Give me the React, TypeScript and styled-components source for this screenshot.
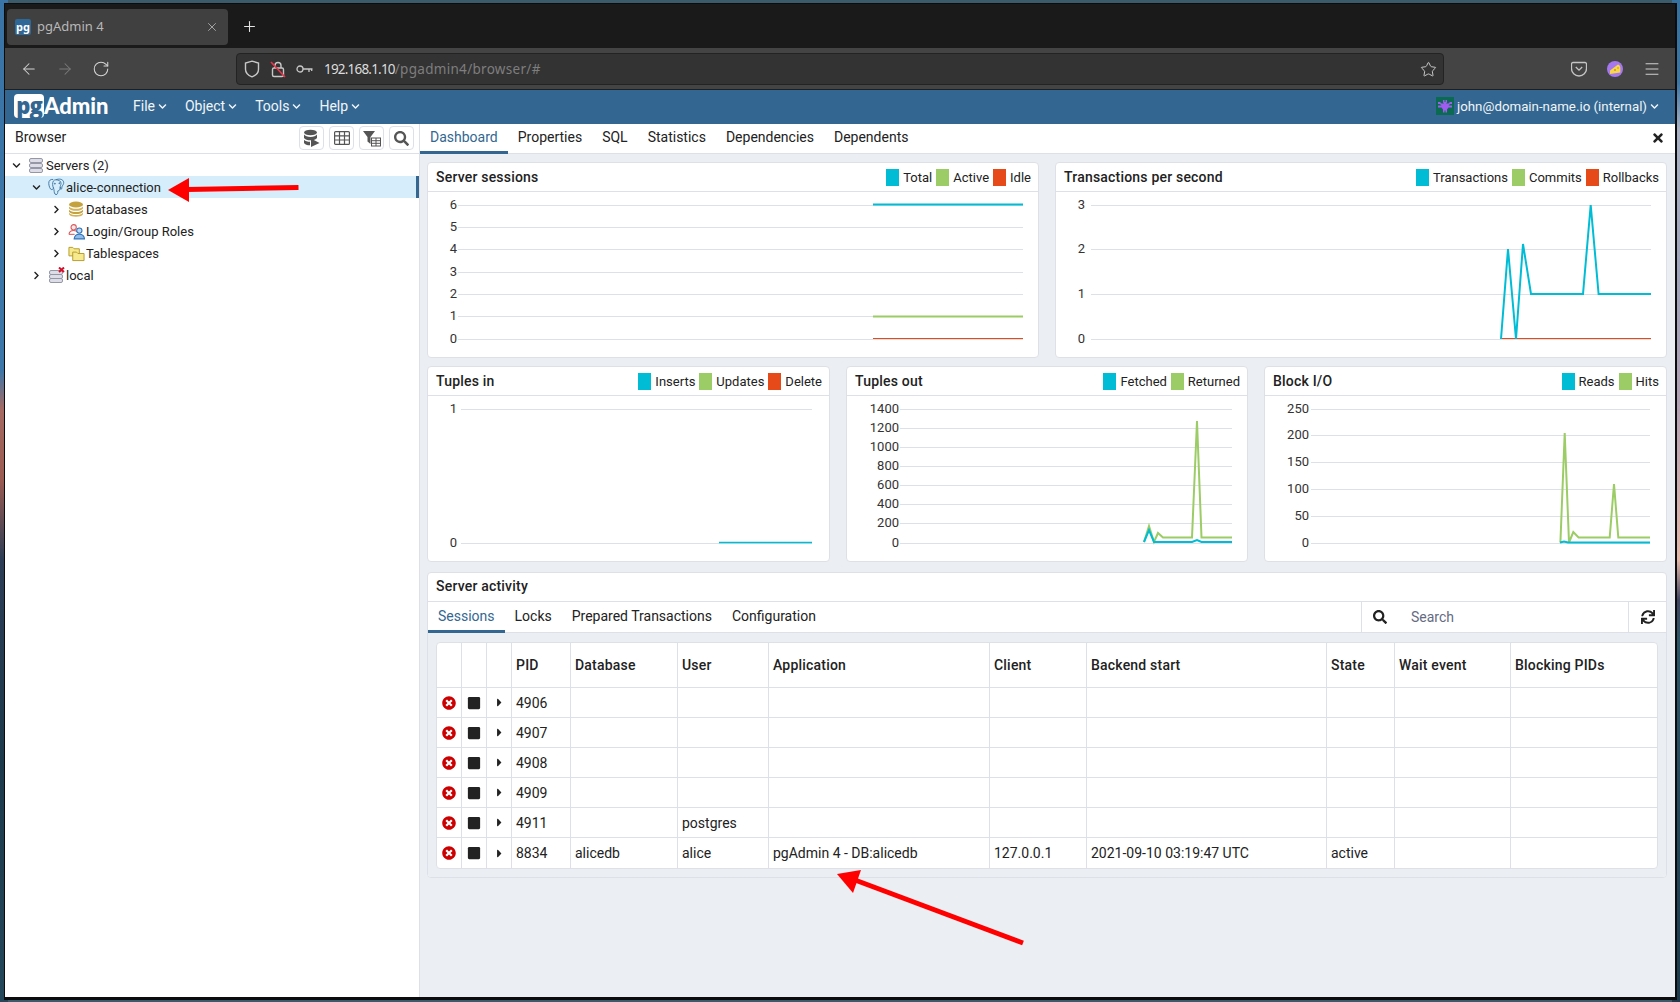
import React from "react";
import styled, { createGlobalStyle } from "styled-components";
import { FaSearch, FaSync, FaTimes, FaTimesCircle, FaSquare, FaCaretRight, FaChevronDown, FaChevronRight } from "react-icons/fa";
import { ArrowLeft, ArrowRight, RotateCw, Star, X, Plus, Menu } from "lucide-react";

const Global = createGlobalStyle`
  html, body { margin: 0; padding: 0; background: #10202c; }
  * { box-sizing: border-box; }
  body { font-family: Roboto, "Liberation Sans", sans-serif; font-size: 14px; color: #222; }
`;

const Screen = styled.div`
  position: relative;
  width: 1680px;
  height: 1002px;
  overflow: hidden;
  padding: 3px 3px 2px 4px;
  background:
    linear-gradient(to bottom, #3a73a6 0, #3d76a8 370px, #a56a62 410px, #9a5b52 480px, #2c3d55 560px, #1d3a4c 760px, #24485a 1002px) left / 8px 100% no-repeat,
    linear-gradient(to bottom, #35709f 0, #3b76a5 83px, #a9b2c4 130px, #9ea4bb 275px, #b0a0b4 400px, #e3b8a8 560px, #3f4560 600px, #2c5568 640px, #1c3a4c 1002px) right / 8px 100% no-repeat,
    #3b5a6a;
`;

const Window = styled.div`
  height: 100%;
  display: flex;
  flex-direction: column;
  border-style: solid;
  border-color: #0c0c0e;
  border-width: 1px 2px 3px 1px;
  overflow: hidden;
`;

const TabStrip = styled.div`
  height: 44px;
  flex: none;
  display: flex;
  align-items: flex-start;
  padding: 5px 0 0 2px;
  background: #1a1a1a;
`;

const BrowserTab = styled.div`
  width: 221px;
  height: 36px;
  display: flex;
  align-items: center;
  padding: 0 9px 0 8px;
  border-radius: 4px;
  background: #404040;
  color: #b8b8b8;
  font-family: "Noto Sans", sans-serif;
  font-size: 13px;
`;

const Favicon = styled.span`
  width: 16px;
  height: 16px;
  flex: none;
  display: flex;
  align-items: center;
  justify-content: center;
  margin-right: 6px;
  padding-bottom: 2px;
  border-radius: 2px;
  background: #2f6797;
  color: #fff;
  font: 700 11px/1 "Noto Sans", sans-serif;
`;

const TabTitle = styled.span`
  flex: 1;
  padding-bottom: 2px;
`;

const NewTab = styled.span`
  margin: 9px 0 0 13px;
  display: flex;
  color: #e4e4e4;
`;

const Toolbar = styled.div`
  height: 42px;
  flex: none;
  display: flex;
  align-items: center;
  padding-top: 1px;
  border-bottom: 1px solid #1f1f1f;
  background: #444;
`;

const NavIcons = styled.div<{ $width: number }>`
  width: ${(p) => p.$width}px;
  flex: none;
  display: flex;
  align-items: center;
  gap: 18px;
  padding-left: 15px;
  color: #d4d4d4;
`;

const UrlBar = styled.div`
  width: 1208px;
  height: 32px;
  flex: none;
  display: flex;
  align-items: center;
  gap: 10px;
  padding: 0 6px 0 7px;
  border: 1px solid #232323;
  border-radius: 4px;
  background: #333;
  color: #c8c8c8;
`;

const UrlText = styled.span`
  flex: 1;
  margin-left: 1px;
  font-family: "Noto Sans", sans-serif;
  font-size: 13.5px;
  color: #dcdcdc;
  letter-spacing: -0.8px;
`;

const UrlDim = styled.span`
  color: #7e7e7e;
  letter-spacing: 0.3px;
`;

const BrowserActions = styled.div`
  flex: none;
  display: flex;
  align-items: center;
  gap: 19px;
  margin-left: 127px;
  color: #d4d4d4;
`;

const Nav = styled.div`
  height: 34px;
  flex: none;
  display: flex;
  align-items: center;
  padding: 0 16px 2px 9px;
  background: #336791;
  color: #f2f5f8;
`;

const Logo = styled.div`
  width: 95px;
  display: flex;
  align-items: center;
  margin-right: 24px;
  color: #fff;
  font: 900 22px/1 Lato, "Open Sans", sans-serif;
`;

const LogoBox = styled.span`
  width: 30px;
  height: 24px;
  display: flex;
  align-items: center;
  justify-content: center;
  padding-bottom: 3px;
  border-radius: 4px;
  background: #fff;
  color: #336791;
  font: 800 22px/1 "Open Sans", sans-serif;
  letter-spacing: -1px;
`;

const MenuItem = styled.span`
  display: flex;
  align-items: center;
  gap: 3px;
  margin-right: 18px;
  font-size: 14px;
`;

const UserMenu = styled.div`
  margin-left: auto;
  display: flex;
  align-items: center;
  gap: 3px;
  font-size: 13.3px;
`;

const Body = styled.div`
  flex: 1;
  min-height: 0;
  display: flex;
  background: #fff;
`;

const Sidebar = styled.aside`
  width: 415px;
  flex: none;
  border-right: 1px solid #dde0e6;
  background: #fff;
`;

const SideHeader = styled.div`
  height: 30px;
  display: flex;
  align-items: center;
  padding: 0 5px 1px 10px;
  border-bottom: 1px solid #dde0e6;
`;

const SideTitle = styled.span`
  flex: 1;
  margin-bottom: 2px;
`;

const ToolGroup = styled.div`
  display: flex;
  gap: 5px;
`;

const ToolButton = styled.span`
  width: 25px;
  height: 24px;
  display: flex;
  align-items: center;
  justify-content: center;
  border: 1px solid #dde0e6;
  border-radius: 4px;
  color: #555;
`;

const Tree = styled.div``;

const TreeRow = styled.div<{ $level: number; $selected?: boolean }>`
  height: 22px;
  display: flex;
  align-items: center;
  padding-left: ${(p) => 5 + p.$level * 20}px;
  border-right: 3px solid ${(p) => (p.$selected ? "#336791" : "transparent")};
  background: ${(p) => (p.$selected ? "#d6eefb" : "transparent")};
  font-size: 13px;
`;

const Chevron = styled.span`
  width: 12px;
  flex: none;
  display: flex;
  justify-content: center;
  margin-right: 6px;
  color: #222;
`;

const TreeIcon = styled.span`
  width: 17px;
  flex: none;
  display: flex;
  margin-right: 1px;
`;

const Main = styled.main`
  flex: 1;
  min-width: 0;
  display: flex;
  flex-direction: column;
  background: #ebeef3;
`;

const TabBar = styled.div`
  height: 30px;
  flex: none;
  display: flex;
  align-items: stretch;
  border-bottom: 1px solid #dde0e6;
  background: #fff;
`;

const TabItem = styled.span<{ $active?: boolean }>`
  display: flex;
  align-items: center;
  padding: 0 10px;
  padding-bottom: 2px;
  border-bottom: 3px solid ${(p) => (p.$active ? "#336791" : "transparent")};
  margin-bottom: -1px;
  color: ${(p) => (p.$active ? "#336791" : "#222")};
  font-size: 14px;
`;

const SubTab = styled(TabItem)`
  padding-bottom: 0;
`;

const CloseTab = styled.span`
  margin-left: auto;
  display: flex;
  align-items: center;
  padding: 0 10px 1px 0;
  color: #222;
`;

const Dashboard = styled.div`
  flex: 1;
  padding: 8px 8px 0 7px;
  display: flex;
  flex-direction: column;
  gap: 9px;
`;

const ChartRow = styled.div<{ $columns: string; $height: number; $pull?: number }>`
  height: ${(p) => p.$height}px;
  margin-top: ${(p) => -(p.$pull ?? 0)}px;
  display: grid;
  grid-template-columns: ${(p) => p.$columns};
  column-gap: 16px;
`;

const Card = styled.section`
  display: flex;
  flex-direction: column;
  overflow: hidden;
  border: 1px solid #dde0e6;
  border-radius: 4px;
  background: #fff;
`;

const CardHeader = styled.div`
  height: 29px;
  flex: none;
  display: flex;
  align-items: center;
  padding: 0 7px 0 8px;
  border-bottom: 1px solid #dde0e6;
`;

const ActivityHeader = styled(CardHeader)`
  padding-bottom: 2px;
`;

const CardTitle = styled.h3`
  flex: 1;
  margin: 0;
  font-size: 14px;
  font-weight: 500;
  letter-spacing: 0.2px;
  color: #222;
`;

const Legend = styled.div`
  display: flex;
  align-items: center;
  gap: 4px;
`;

const LegendItem = styled.span`
  display: flex;
  align-items: center;
  gap: 4px;
  font-size: 13px;
  color: #222;
`;

const Swatch = styled.i<{ $color: string }>`
  width: 13px;
  height: 17px;
  display: block;
  background: ${(p) => p.$color};
`;

const ChartSvg = styled.svg`
  display: block;
  flex: none;
  font-family: Roboto, sans-serif;
  font-size: 13px;
`;

const ActivityCard = styled(Card)`
  height: 306px;
  margin-top: 1px;
`;

const SubBar = styled.div`
  height: 31px;
  flex: none;
  display: flex;
  align-items: stretch;
  border-bottom: 1px solid #dde0e6;
`;

const SearchBox = styled.div`
  width: 267px;
  margin-left: auto;
  display: flex;
  align-items: center;
  padding-left: 11px;
  border-left: 1px solid #dde0e6;
  color: #222;
`;

const SearchHint = styled.span`
  margin-left: 24px;
  color: #646b82;
`;

const RefreshBox = styled.div`
  width: 38px;
  display: flex;
  align-items: center;
  justify-content: center;
  border-left: 1px solid #dde0e6;
  color: #222;
`;

const ActivityBody = styled.div`
  flex: 1;
  padding: 9px 8px 8px 8px;
  background: #ebeef3;
`;

const TableFrame = styled.div`
  overflow: hidden;
  border: 1px solid #dde0e6;
  border-radius: 4px;
  background: #fff;
`;

const SessionTable = styled.table`
  width: 100%;
  table-layout: fixed;
  border-collapse: separate;
  border-spacing: 0;
  font-size: 14px;
`;

const Th = styled.th`
  height: 45px;
  padding: 0 4px;
  border-right: 1px solid #dde0e6;
  border-bottom: 1px solid #dde0e6;
  font-weight: 500;
  letter-spacing: 0.2px;
  text-align: left;
  &:last-child { border-right: 0; }
`;

const Td = styled.td`
  height: 30px;
  padding: 0 4px;
  border-right: 1px solid #dde0e6;
  border-bottom: 1px solid #dde0e6;
  color: #222;
  white-space: nowrap;
  &:last-child { border-right: 0; }
  tr:last-child & { border-bottom: 0; }
`;

const IconCell = styled.span<{ $color: string }>`
  display: flex;
  justify-content: center;
  color: ${(p) => p.$color};
`;

const Overlay = styled.svg`
  position: absolute;
  inset: 0;
  pointer-events: none;
`;

const CYAN = "#00bcd4";
const GREEN = "#9ccc65";
const RED = "#e64a19";

type Series = { color: string; width: number; points: [number, number][] };
type ChartDef = {
  title: string;
  legend: [string, string][];
  box: [number, number, number, number];
  x0: number;
  x1: number;
  labelX: number;
  grid: [string, number][];
  series: Series[];
};

const sessions: ChartDef = {
  title: "Server sessions",
  legend: [["Total", CYAN], ["Active", GREEN], ["Idle", RED]],
  box: [428, 192, 610, 165],
  x0: 458, x1: 1023, labelX: 457,
  grid: [["6", 205], ["5", 227], ["4", 249], ["3", 272], ["2", 294], ["1", 316], ["0", 339]],
  series: [
    { color: RED, width: 1, points: [[873, 338.5], [1023, 338.5]] },
    { color: GREEN, width: 2, points: [[873, 316.5], [1023, 316.5]] },
    { color: CYAN, width: 2, points: [[873, 204.5], [1023, 204.5]] },
  ],
};

const transactions: ChartDef = {
  title: "Transactions per second",
  legend: [["Transactions", CYAN], ["Commits", GREEN], ["Rollbacks", RED]],
  box: [1056, 192, 610, 165],
  x0: 1091, x1: 1651, labelX: 1085,
  grid: [["3", 205], ["2", 249], ["1", 294], ["0", 339]],
  series: [
    { color: RED, width: 1, points: [[1501, 338.5], [1651, 338.5]] },
    { color: CYAN, width: 2, points: [[1501, 339], [1508, 249], [1516, 339], [1523, 244], [1531, 294], [1583, 294], [1590.7, 205], [1598.6, 294], [1651, 294]] },
  ],
};

const tuplesIn: ChartDef = {
  title: "Tuples in",
  legend: [["Inserts", CYAN], ["Updates", GREEN], ["Delete", RED]],
  box: [428, 396, 401, 165],
  x0: 461, x1: 812, labelX: 457,
  grid: [["1", 409], ["0", 543]],
  series: [{ color: CYAN, width: 1.5, points: [[719, 542.5], [812, 542.5]] }],
};

const tuplesOut: ChartDef = {
  title: "Tuples out",
  legend: [["Fetched", CYAN], ["Returned", GREEN]],
  box: [847, 396, 400, 165],
  x0: 900, x1: 1232, labelX: 899,
  grid: [["1400", 409], ["1200", 428], ["1000", 447], ["800", 466], ["600", 485], ["400", 504], ["200", 523], ["0", 543]],
  series: [
    { color: GREEN, width: 2, points: [[1144, 542], [1149, 526], [1154, 542], [1158, 533], [1163, 537.5], [1192, 537.5], [1197, 421], [1201.5, 537.5], [1232, 537.5]] },
    { color: CYAN, width: 2, points: [[1144, 542], [1149, 530], [1154, 542], [1192, 542], [1197, 540], [1201.5, 542], [1232, 542]] },
  ],
};

const blockIO: ChartDef = {
  title: "Block I/O",
  legend: [["Reads", CYAN], ["Hits", GREEN]],
  box: [1265, 396, 401, 165],
  x0: 1311, x1: 1650, labelX: 1309,
  grid: [["250", 409], ["200", 435], ["150", 462], ["100", 489], ["50", 516], ["0", 543]],
  series: [
    { color: GREEN, width: 2, points: [[1560.4, 542.5], [1564.7, 433], [1569, 542.5], [1573.3, 532], [1578.6, 537.5], [1609.7, 537.5], [1614, 484], [1618.3, 537.5], [1650, 537.5]] },
    { color: CYAN, width: 2, points: [[1560, 542.5], [1564, 541.5], [1568, 542.5], [1650, 542.5]] },
  ],
};

function Chart({ def }: { def: ChartDef }) {
  const [bx, by, bw, bh] = def.box;
  return (
    <Card>
      <CardHeader>
        <CardTitle>{def.title}</CardTitle>
        <Legend>
          {def.legend.map(([name, color]) => (
            <LegendItem key={name}>
              <Swatch $color={color} />
              {name}
            </LegendItem>
          ))}
        </Legend>
      </CardHeader>
      <ChartSvg width={bw} height={bh} viewBox={`${bx} ${by} ${bw} ${bh}`}>
        {def.grid.map(([label, y]) => (
          <g key={label}>
            <line x1={def.x0} x2={def.x1} y1={y} y2={y} stroke="#dde0e6" strokeWidth={1} shapeRendering="crispEdges" />
            <text x={def.labelX} y={y + 3.5} textAnchor="end" fill="#333">{label}</text>
          </g>
        ))}
        {def.series.map((s, i) => (
          <polyline key={i} points={s.points.map((p) => p.join(",")).join(" ")} fill="none" stroke={s.color} strokeWidth={s.width} />
        ))}
      </ChartSvg>
    </Card>
  );
}

const ShieldIcon = () => (
  <svg width="16" height="18" viewBox="0 0 16 18" fill="none" stroke="#c8c8c8" strokeWidth="1.4">
    <path d="M8 1.2 14.5 3v6.2c0 3.6-3 6.3-6.5 7.6C4.500 15.500 1.500 12.800 1.500 9.200V3L8 1.200Z" />
  </svg>
);

const LockIcon = () => (
  <svg width="16" height="18" viewBox="0 0 16 18" fill="none">
    <path d="M5 8V5.500a3 3 0 0 1 6 0V8" stroke="#c8c8c8" strokeWidth="1.400" />
    <rect x="2.500" y="8" width="11" height="8.500" rx="1.500" stroke="#c8c8c8" strokeWidth="1.400" />
    <path d="M1 2 15 17" stroke="#e8344a" strokeWidth="1.600" />
  </svg>
);

const KeyIcon = () => (
  <svg width="17" height="10" viewBox="0 0 17 10" fill="none" stroke="#c8c8c8" strokeWidth="1.300">
    <circle cx="4" cy="5" r="3" />
    <path d="M7 5h9.500M13 5v3M15.700 5v2" />
  </svg>
);

const PocketIcon = () => (
  <svg width="16" height="16" viewBox="0 0 16 16" fill="none" stroke="#c4c4c4" strokeWidth="1.300">
    <path d="M2 1.500h12a1.500 1.500 0 0 1 1.500 1.500v4.500a7.500 7.500 0 0 1-15 0V3A1.500 1.500 0 0 1 2 1.500Z" />
    <path d="m4.800 6 3.200 3.200L11.200 6" />
  </svg>
);

const CheeseIcon = () => (
  <svg width="18" height="18" viewBox="0 0 18 18">
    <circle cx="9" cy="9" r="8" fill="#a678f0" />
    <path d="M4 10.500 12 4.500c1.500.6 2.300 1.800 2.300 3.500v4.500l-10.300 1.500Z" fill="#f7d84a" />
    <circle cx="9" cy="10" r="1" fill="#c99a1e" />
    <circle cx="12" cy="8" r=".8" fill="#c99a1e" />
  </svg>
);

const UserAvatar = () => (
  <svg width="18" height="18" viewBox="0 0 18 18">
    <rect width="18" height="18" fill="#0b6b52" />
    <path d="M7 3h1.500v2h1V3H11v2.500l-1 1h2.500L14 5h2v2h-2l-1.500 1.500H16v2h-3.500L11 12.500v3H9.500v-2h-1v2H7v-3l-1.500-2H2v-2h3.500L4 7H2V5h2l1.500 1.500H8l-1-1V3Z" fill="#a05cf0" />
  </svg>
);

const QueryIcon = () => (
  <svg width="17" height="18" viewBox="0 0 17 18">
    <ellipse cx="7.500" cy="3.500" rx="6.500" ry="2.800" fill="#555" />
    <path d="M1 5.500c1 1.700 3.500 2.400 6.500 2.400s5.500-.7 6.500-2.400V9c-1 1.500-3.500 2.300-6.500 2.300S2 10.500 1 9V5.500Z" fill="#555" />
    <path d="M1 10.800c1.300 1.400 3.500 2 6 2v3.500c-3 0-5-.7-6-2.300v-3.200Z" fill="#555" />
    <path d="M8 9.500 16.500 14 8 18Z" fill="#555" />
  </svg>
);

const GridIcon = () => (
  <svg width="16" height="14" viewBox="0 0 16 14" fill="none" stroke="#555" strokeWidth="1.200">
    <rect x=".6" y=".6" width="14.800" height="12.800" rx="1" />
    <path d="M.6 4.800h14.800M.6 9h14.800M5.500.6v12.800M10.500.6v12.800" />
  </svg>
);

const FilterIcon = () => (
  <svg width="18" height="17" viewBox="0 0 18 17">
    <path d="M0 1h12L7.500 7v7L4.500 11.500V7L0 1Z" fill="#555" />
    <g fill="none" stroke="#555" strokeWidth="1">
      <rect x="8.500" y="8" width="9" height="8" />
      <path d="M8.500 10.700h9M8.500 13.300h9M13 8v8" />
    </g>
  </svg>
);

const StackIcon = ({ alert }: { alert?: boolean }) => (
  <svg width="17" height="17" viewBox="0 0 17 17">
    <g fill="#dcdde6" stroke="#9497a6" strokeWidth="1">
      <rect x="1.500" y={alert ? 3.500 : 1.500} width="13" height="4" rx="1.500" />
      <rect x="1.500" y={alert ? 7.500 : 6.500} width="13" height="4" rx="1.500" />
      <rect x="1.500" y={alert ? 11.500 : 11.500} width="13" height="4" rx="1.500" />
    </g>
    {alert && <path d="M11 .5 16 5M16 .5 11 5" stroke="#d0112b" strokeWidth="2" />}
  </svg>
);

const ElephantIcon = () => (
  <svg width="18" height="18" viewBox="0 0 18 18" fill="none" stroke="#3f76a3" strokeWidth="1">
    <path d="M5.500 1C2.500.6.500 2.300.8 5.500c.3 3 1.500 6.300 3.200 6.300 1.200 0 1.700-1.200 1.900-2.500" />
    <path d="M8.500 1.300C5.800 1.300 4.800 3.500 4.900 6.300c.1 2.700 1.100 3.800 1.400 5.400.3 2.400.3 5.300 2.200 5.300 1.700 0 1.800-1.500 1.900-3.800 1.600-.3 3-1.900 2.900-4.300" />
    <path d="M8.500 1.300c3.200-1.300 7.600-.8 8.100 2.700.3 2.200-1.400 3.300-1.900 4.900-.3 1.100.2 1.600-.3 2.200-.9.600-1.700 0-1.700-1.100.1-2.200 1.100-3.300 1.100-4.900 0-2.200-2.200-3.600-5.300-3.800Z" />
    <circle cx="7.300" cy="5.500" r=".5" fill="#3f76a3" />
    <circle cx="12" cy="5" r=".5" fill="#3f76a3" />
  </svg>
);

const DatabaseIcon = () => (
  <svg width="16" height="16" viewBox="0 0 16 16">
    <ellipse cx="8" cy="3.500" rx="7" ry="3" fill="#c4a23e" />
    <path d="M1 5.500C2 7.200 5 7.800 8 7.800s6-.6 7-2.300v2C14 9.200 11 9.800 8 9.800S2 9.200 1 7.500v-2Z" fill="#d2b35a" />
    <path d="M1 8.700c1 1.700 4 2.300 7 2.300s6-.6 7-2.300v2C14 12.400 11 13 8 13s-6-.6-7-2.300v-2Z" fill="#c4a23e" />
    <path d="M1 11.700c1 1.700 4 2.300 7 2.300s6-.6 7-2.300v1.500C14 15 11 15.700 8 15.700S2 15 1 13.200v-1.500Z" fill="#d2b35a" />
  </svg>
);

const RolesIcon = () => (
  <svg width="18" height="17" viewBox="0 0 18 17" fill="none" strokeWidth="1.100">
    <circle cx="6" cy="4" r="2.800" stroke="#d9585c" fill="#fbe9e9" />
    <path d="M1 11.500C1.500 8.500 3.500 7.500 6 7.500s3.500.6 4.500 2" stroke="#d9585c" />
    <path d="M1 11.500h6" stroke="#d9585c" />
    <circle cx="12" cy="7.500" r="2.800" stroke="#2f71b8" fill="#bcd9f4" />
    <path d="M6.500 16.300c.3-3.500 2.500-5 5.500-5s5.200 1.500 5.500 5h-11Z" stroke="#2f71b8" fill="#8fbce8" />
  </svg>
);

const FoldersIcon = () => (
  <svg width="18" height="17" viewBox="0 0 18 17" stroke="#b59a2a" strokeWidth="1">
    <path d="M1 2h4l1.500 1.500H12V11H1V2Z" fill="#f7e98e" />
    <path d="M5 7h4l1.500 1.500h6.500v7.500H5V7Z" fill="#f7e98e" />
  </svg>
);

const sessionRows = [
  ["4906", "", "", "", "", "", ""],
  ["4907", "", "", "", "", "", ""],
  ["4908", "", "", "", "", "", ""],
  ["4909", "", "", "", "", "", ""],
  ["4911", "", "postgres", "", "", "", ""],
  ["8834", "alicedb", "alice", "pgAdmin 4 - DB:alicedb", "127.0.0.1", "2021-09-10 03:19:47 UTC", "active"],
];

const colWidths = [25, 25, 25, 59, 107, 91, 221, 97, 240, 68, 116, 147];
const headers = ["", "", "", "PID", "Database", "User", "Application", "Client", "Backend start", "State", "Wait event", "Blocking PIDs"];

export default function App() {
  return (
    <Screen>
      <Global />
      <Window>
        <TabStrip>
          <BrowserTab>
            <Favicon>pg</Favicon>
            <TabTitle>pgAdmin 4</TabTitle>
            <X size={14} strokeWidth={1.5} color="#b0b0b0" />
          </BrowserTab>
          <NewTab><Plus size={17} strokeWidth={1.5} /></NewTab>
        </TabStrip>
        <Toolbar>
          <NavIcons $width={231}>
            <ArrowLeft size={18} strokeWidth={1.4} />
            <ArrowRight size={18} strokeWidth={1.4} color="#7b7b7b" />
            <RotateCw size={18} strokeWidth={1.4} />
          </NavIcons>
          <UrlBar>
            <ShieldIcon />
            <LockIcon />
            <KeyIcon />
            <UrlText>192.168.1.10<UrlDim>/pgadmin4/browser/#</UrlDim></UrlText>
            <Star size={17} strokeWidth={1.4} />
          </UrlBar>
          <BrowserActions>
            <PocketIcon />
            <CheeseIcon />
            <Menu size={18} strokeWidth={1.3} />
          </BrowserActions>
        </Toolbar>
        <Nav>
          <Logo>
            <LogoBox>pg</LogoBox>Admin
          </Logo>
          {["File", "Object", "Tools", "Help"].map((m) => (
            <MenuItem key={m}>
              {m}
              <FaChevronDown size={9} />
            </MenuItem>
          ))}
          <UserMenu>
            <UserAvatar />
            john@domain-name.io (internal)
            <FaChevronDown size={9} />
          </UserMenu>
        </Nav>
        <Body>
          <Sidebar>
            <SideHeader>
              <SideTitle>Browser</SideTitle>
              <ToolGroup>
                <ToolButton><QueryIcon /></ToolButton>
                <ToolButton><GridIcon /></ToolButton>
                <ToolButton><FilterIcon /></ToolButton>
                <ToolButton><FaSearch size={15} /></ToolButton>
              </ToolGroup>
            </SideHeader>
            <Tree>
              <TreeRow $level={0}>
                <Chevron><FaChevronDown size={9} /></Chevron>
                <TreeIcon><StackIcon /></TreeIcon>Servers (2)
              </TreeRow>
              <TreeRow $level={1} $selected>
                <Chevron><FaChevronDown size={9} /></Chevron>
                <TreeIcon><ElephantIcon /></TreeIcon>alice-connection
              </TreeRow>
              <TreeRow $level={2}>
                <Chevron><FaChevronRight size={9} /></Chevron>
                <TreeIcon><DatabaseIcon /></TreeIcon>Databases
              </TreeRow>
              <TreeRow $level={2}>
                <Chevron><FaChevronRight size={9} /></Chevron>
                <TreeIcon><RolesIcon /></TreeIcon>Login/Group Roles
              </TreeRow>
              <TreeRow $level={2}>
                <Chevron><FaChevronRight size={9} /></Chevron>
                <TreeIcon><FoldersIcon /></TreeIcon>Tablespaces
              </TreeRow>
              <TreeRow $level={1}>
                <Chevron><FaChevronRight size={9} /></Chevron>
                <TreeIcon><StackIcon alert /></TreeIcon>local
              </TreeRow>
            </Tree>
          </Sidebar>
          <Main>
            <TabBar>
              <TabItem $active>Dashboard</TabItem>
              <TabItem>Properties</TabItem>
              <TabItem>SQL</TabItem>
              <TabItem>Statistics</TabItem>
              <TabItem>Dependencies</TabItem>
              <TabItem>Dependents</TabItem>
              <CloseTab><FaTimes size={14} /></CloseTab>
            </TabBar>
            <Dashboard>
              <ChartRow $columns="1fr 1fr" $height={196}>
                <Chart def={sessions} />
                <Chart def={transactions} />
              </ChartRow>
              <ChartRow $columns="403px 402px 1fr" $height={196} $pull={1}>
                <Chart def={tuplesIn} />
                <Chart def={tuplesOut} />
                <Chart def={blockIO} />
              </ChartRow>
              <ActivityCard>
                <ActivityHeader><CardTitle>Server activity</CardTitle></ActivityHeader>
                <SubBar>
                  <SubTab $active>Sessions</SubTab>
                  <SubTab>Locks</SubTab>
                  <SubTab>Prepared Transactions</SubTab>
                  <SubTab>Configuration</SubTab>
                  <SearchBox>
                    <FaSearch size={14} />
                    <SearchHint>Search</SearchHint>
                  </SearchBox>
                  <RefreshBox><FaSync size={14} /></RefreshBox>
                </SubBar>
                <ActivityBody>
                  <TableFrame>
                    <SessionTable>
                      <colgroup>
                        {colWidths.map((w, i) => <col key={i} style={{ width: w }} />)}
                      </colgroup>
                      <thead>
                        <tr>{headers.map((h, i) => <Th key={i}>{h}</Th>)}</tr>
                      </thead>
                      <tbody>
                        {sessionRows.map((row) => (
                          <tr key={row[0]}>
                            <Td><IconCell $color="#cc0000"><FaTimesCircle size={14} /></IconCell></Td>
                            <Td><IconCell $color="#222"><FaSquare size={14} /></IconCell></Td>
                            <Td><IconCell $color="#222"><FaCaretRight size={13} /></IconCell></Td>
                            {row.map((c, i) => <Td key={i}>{c}</Td>)}
                            <Td /><Td />
                          </tr>
                        ))}
                      </tbody>
                    </SessionTable>
                  </TableFrame>
                </ActivityBody>
              </ActivityCard>
            </Dashboard>
          </Main>
        </Body>
      </Window>
      <Overlay width="1680" height="1002" viewBox="0 0 1680 1002">
        <polygon points="168,190 189,178 189,202" fill="#f00" />
        <line x1="187" y1="189.500" x2="298.500" y2="187.500" stroke="#f00" strokeWidth="5" />
        <polygon points="837,874 861,870 853,893" fill="#f00" />
        <line x1="855" y1="880" x2="1023" y2="943" stroke="#f00" strokeWidth="5" />
      </Overlay>
    </Screen>
  );
}
